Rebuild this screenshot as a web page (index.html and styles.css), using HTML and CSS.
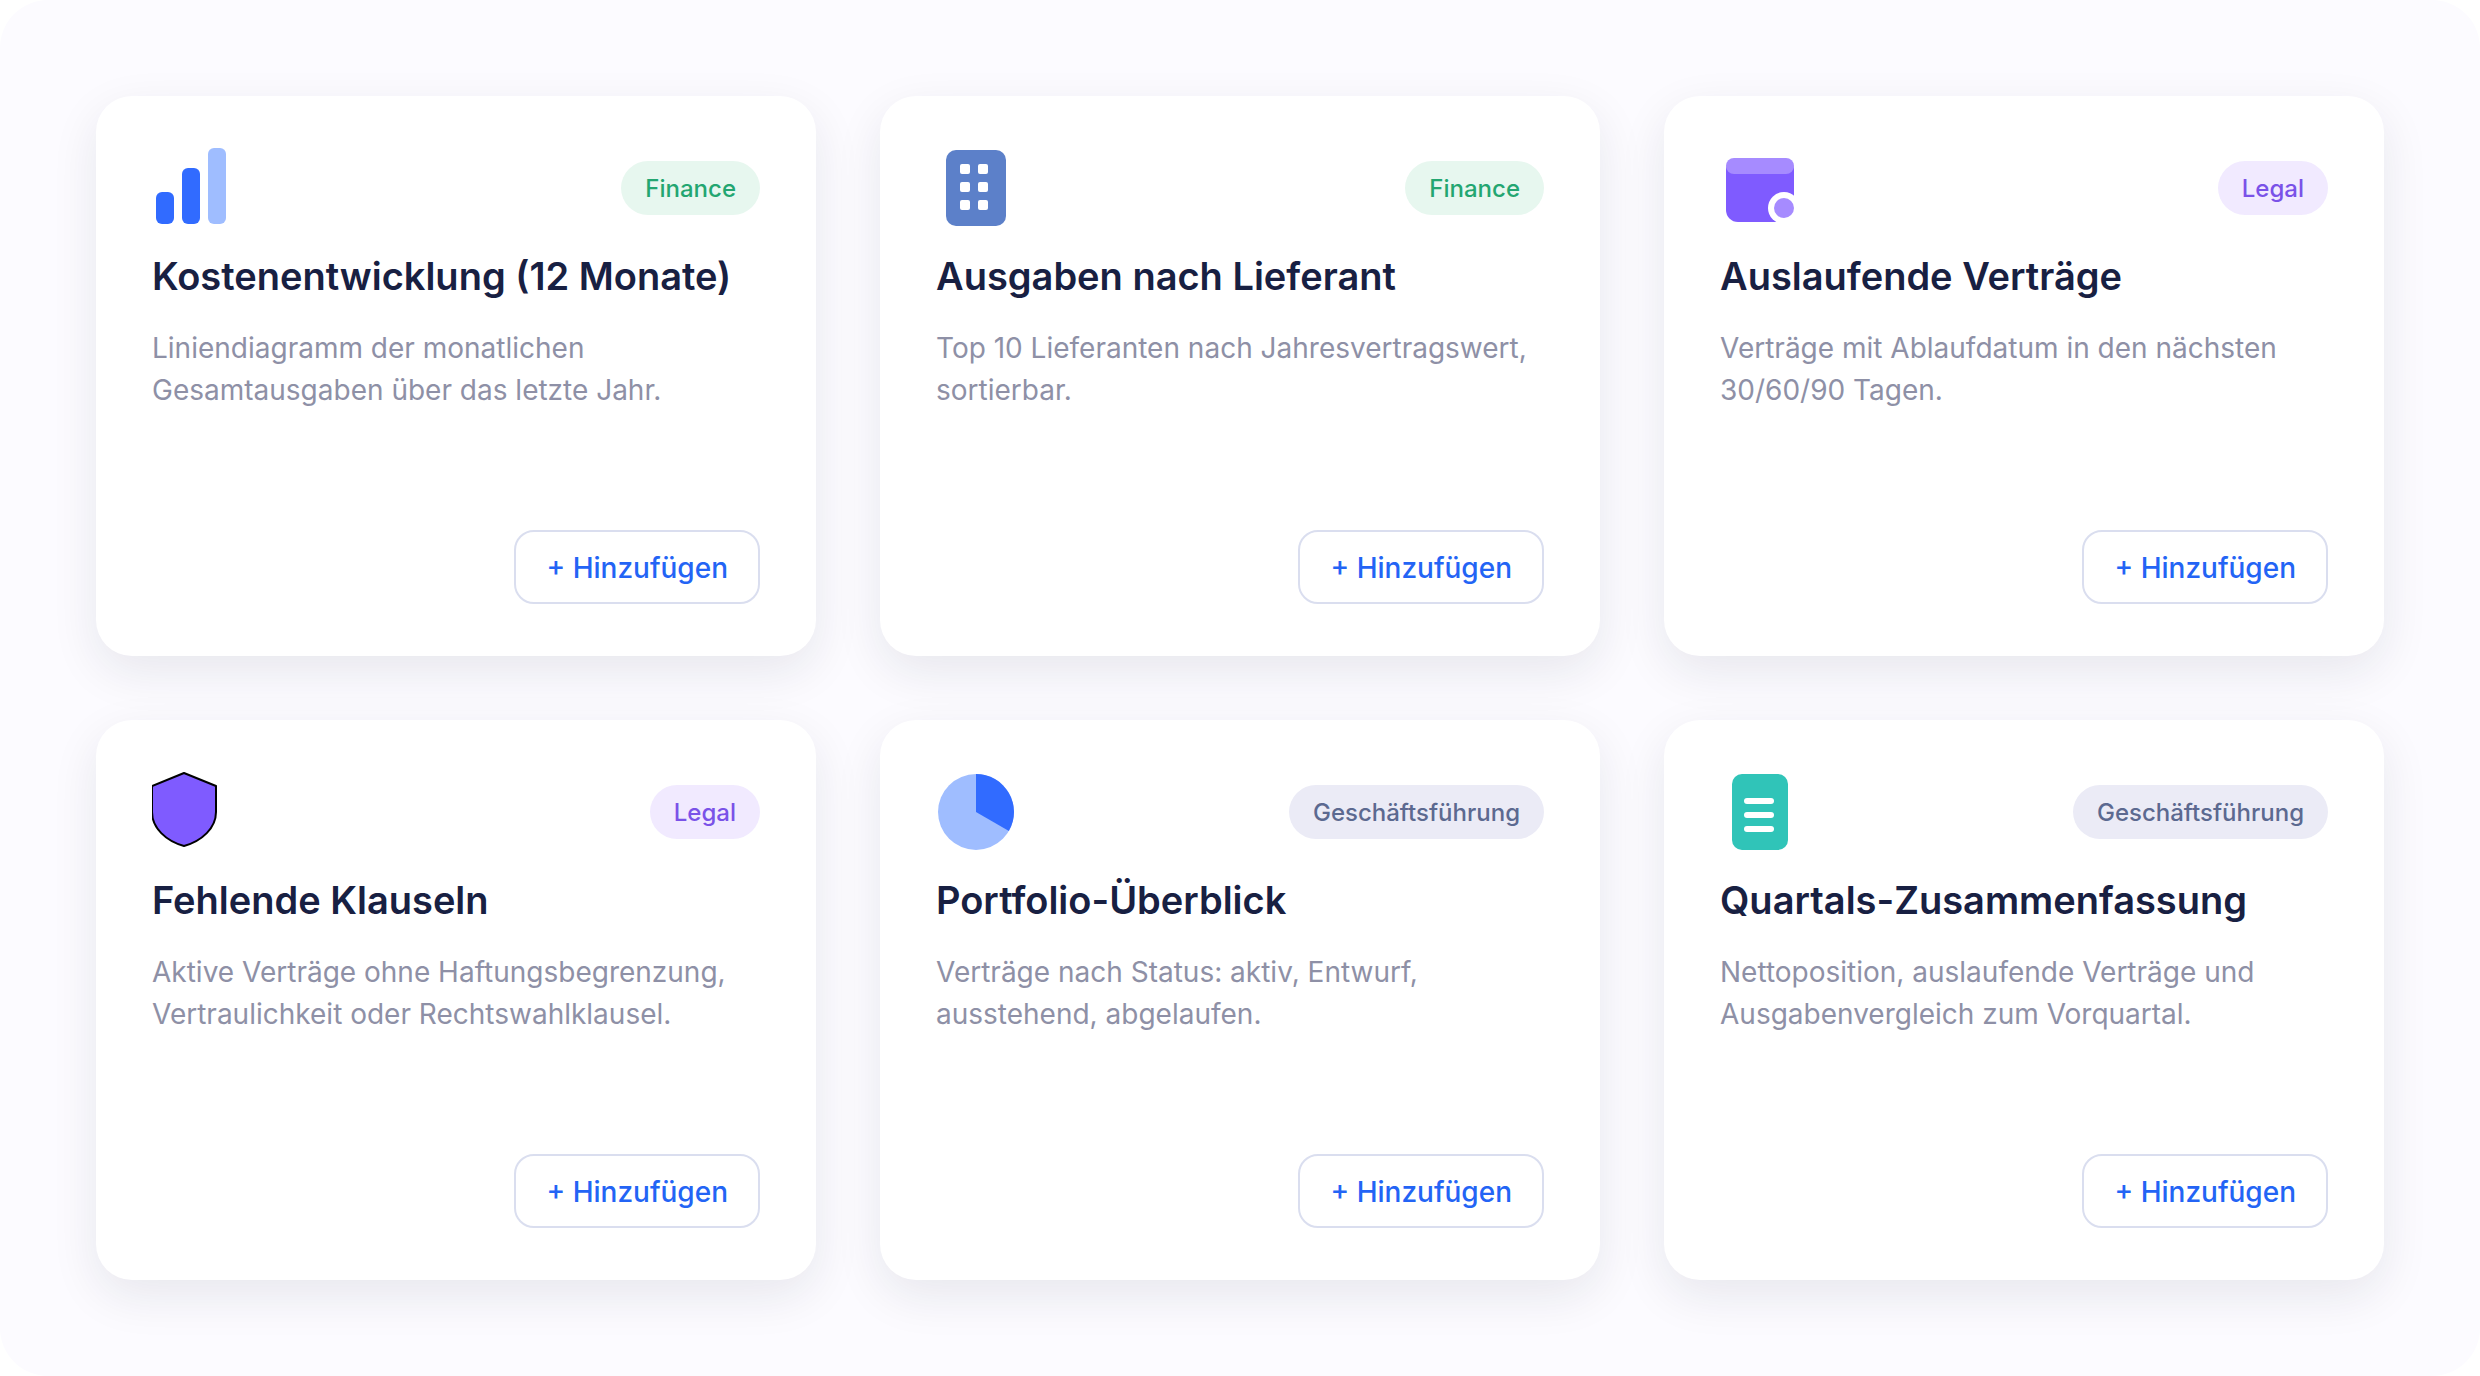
FILE: index.html
```html
<!DOCTYPE html>
<html lang="de">
<head>
    <meta charset="UTF-8">
    <meta name="viewport" content="width=device-width, initial-scale=1.0">
    <title>Berichte</title>
    <link rel="stylesheet" href="styles.css">
</head>
<body>

    <main class="gallery">
        <article class="card">
            <div class="card-top">
                <svg class="icon" viewBox="0 0 80 80" aria-hidden="true">
                    <rect x="4" y="44" width="18" height="32" rx="6" fill="#316bff"/>
                    <rect x="30" y="20" width="18" height="56" rx="6" fill="#316bff"/>
                    <rect x="56" y="0" width="18" height="76" rx="6" fill="#9fbdff"/>
                </svg>
                <span class="tag finance">Finance</span>
            </div>
            <h2>Kostenentwicklung (12 Monate)</h2>
            <p>Liniendiagramm der monatlichen Gesamtausgaben über das letzte Jahr.</p>
            <button type="button">+ Hinzufügen</button>
        </article>

        <article class="card">
            <div class="card-top">
                <svg class="icon" viewBox="0 0 80 80" aria-hidden="true">
                    <rect x="10" y="2" width="60" height="76" rx="10" fill="#5c80c9"/>
                    <g fill="#fff">
                        <rect x="24" y="16" width="10" height="10" rx="2"/>
                        <rect x="42" y="16" width="10" height="10" rx="2"/>
                        <rect x="24" y="34" width="10" height="10" rx="2"/>
                        <rect x="42" y="34" width="10" height="10" rx="2"/>
                        <rect x="24" y="52" width="10" height="10" rx="2"/>
                        <rect x="42" y="52" width="10" height="10" rx="2"/>
                    </g>
                </svg>
                <span class="tag finance">Finance</span>
            </div>
            <h2>Ausgaben nach Lieferant</h2>
            <p>Top 10 Lieferanten nach Jahresvertragswert, sortierbar.</p>
            <button type="button">+ Hinzufügen</button>
        </article>

        <article class="card">
            <div class="card-top">
                <svg class="icon" viewBox="0 0 80 80" aria-hidden="true">
                    <rect x="6" y="10" width="68" height="64" rx="12" fill="#7f5bff"/>
                    <rect x="6" y="10" width="68" height="16" rx="8" fill="#a68bff"/>
                    <circle cx="64" cy="60" r="16" fill="#fff"/>
                    <circle cx="64" cy="60" r="10" fill="#a68bff"/>
                </svg>
                <span class="tag legal">Legal</span>
            </div>
            <h2>Auslaufende Verträge</h2>
            <p>Verträge mit Ablaufdatum in den nächsten 30/60/90 Tagen.</p>
            <button type="button">+ Hinzufügen</button>
        </article>

        <article class="card">
            <div class="card-top">
                <svg class="icon" viewBox="0 0 80 80" aria-hidden="true">
                    <path d="M32 1 64 14V40C64 56 50 69 32 74C14 69 0 56 0 40V14Z" fill="#7f5bff" stroke="#000" stroke-width="2" stroke-linejoin="round"/>
                </svg>
                <span class="tag legal">Legal</span>
            </div>
            <h2>Fehlende Klauseln</h2>
            <p>Aktive Verträge ohne Haftungsbegrenzung, Vertraulichkeit oder Rechtswahlklausel.</p>
            <button type="button">+ Hinzufügen</button>
        </article>

        <article class="card">
            <div class="card-top">
                <svg class="icon" viewBox="0 0 80 80" aria-hidden="true">
                    <circle cx="40" cy="40" r="38" fill="#9fbdff"/>
                    <path d="M40 40V2A38 38 0 0 1 72.9 59Z" fill="#316bff"/>
                </svg>
                <span class="tag management">Geschäftsführung</span>
            </div>
            <h2>Portfolio-Überblick</h2>
            <p>Verträge nach Status: aktiv, Entwurf, ausstehend, abgelaufen.</p>
            <button type="button">+ Hinzufügen</button>
        </article>

        <article class="card">
            <div class="card-top">
                <svg class="icon" viewBox="0 0 80 80" aria-hidden="true">
                    <rect x="12" y="2" width="56" height="76" rx="10" fill="#30c4b8"/>
                    <g fill="#fff">
                        <rect x="24" y="26" width="30" height="6" rx="3"/>
                        <rect x="24" y="40" width="30" height="6" rx="3"/>
                        <rect x="24" y="54" width="30" height="6" rx="3"/>
                    </g>
                </svg>
                <span class="tag management">Geschäftsführung</span>
            </div>
            <h2>Quartals-Zusammenfassung</h2>
            <p>Nettoposition, auslaufende Verträge und Ausgabenvergleich zum Vorquartal.</p>
            <button type="button">+ Hinzufügen</button>
        </article>
    </main>

</body>
</html>
```
FILE: styles.css
```css
* {
    box-sizing: border-box;
}

body {
    margin: 0;
    background-color: #fff;
    font-family: Inter, "Liberation Sans", sans-serif;
}

.gallery {
    display: grid;
    grid-template-columns: repeat(3, 1fr);
    grid-auto-rows: 1fr;
    gap: 64px;
    min-height: 100vh;
    padding: 96px;
    background-color: #fcfbff;
    border-radius: 48px;
}

.card {
    display: flex;
    flex-direction: column;
    padding: 52px 56px;
    background-color: #fff;
    border-radius: 36px;
    box-shadow: 0 16px 48px rgba(24, 28, 50, 0.09);
}

.card-top {
    display: flex;
    align-items: center;
    justify-content: space-between;
}

.icon {
    width: 80px;
    height: 80px;
}

.tag {
    padding: 2px 24px 0;
    border-radius: 27px;
    font-size: 24px;
    font-weight: 500;
    line-height: 52px;
}

.finance {
    background-color: #e7f7ef;
    color: #23a671;
}

.legal {
    background-color: #f1eaff;
    color: #7a52e8;
}

.management {
    background-color: #ebebf6;
    color: #5c6990;
}

h2 {
    margin: 24px 0 0;
    color: #182042;
    font-size: 38px;
    font-weight: 600;
    line-height: 48px;
}

p {
    margin: 27px 0 0;
    color: #8e90a6;
    font-size: 28px;
    line-height: 42px;
}

button {
    align-self: flex-end;
    height: 74px;
    margin-top: auto;
    padding: 2px 30px 0;
    background-color: #fff;
    border: 2px solid #dadeef;
    border-radius: 20px;
    color: #2364f5;
    font-family: inherit;
    font-size: 28px;
    font-weight: 500;
    cursor: pointer;
}

button:hover {
    background-color: #f5f7ff;
}

@media screen and (max-width: 1800px) {
    .gallery {
        grid-template-columns: repeat(auto-fit, minmax(480px, 1fr));
    }
}
```
